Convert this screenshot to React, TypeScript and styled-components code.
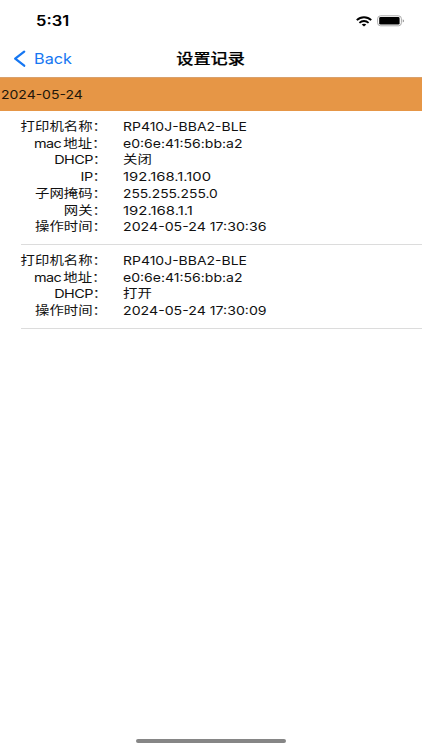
import React from 'react';
import styled, { createGlobalStyle } from 'styled-components';

const GlobalStyle = createGlobalStyle`
  * { box-sizing: border-box; }
  body {
    margin: 0;
    background: #fff;
    color: #111;
    font-family: Inter, "Noto Sans CJK SC", sans-serif;
  }
`;

const Screen = styled.div`
  display: flex;
  flex-direction: column;
  width: 422px;
  height: 750px;
  overflow: hidden;
  background: #fff;
`;

/* Wide lettering: stretched sideways from the edge it is aligned to. */
const Wide = styled.span<{ $x?: number; $from?: string }>`
  display: inline-block;
  white-space: pre;
  transform: scaleX(${p => p.$x ?? 1.2});
  transform-origin: ${p => p.$from ?? 'left'} center;
`;

const StatusBar = styled.header`
  display: flex;
  align-items: center;
  justify-content: space-between;
  height: 41px;
  padding: 1px 17px 0 36px;
  font-size: 14px;
  line-height: 20px;
  font-weight: 600;
  color: #000;
`;

const StatusIcons = styled.div`
  display: flex;
  align-items: center;
  gap: 5px;
`;

const NavBar = styled.nav`
  display: grid;
  grid-template-columns: 1fr auto 1fr;
  align-items: center;
  height: 36px;
  padding: 0 13px;
`;

const BackButton = styled.button`
  display: flex;
  align-items: center;
  gap: 8px;
  padding: 0;
  border: 0;
  background: none;
  color: #1677f2;
  font: 400 14.5px/20px Inter, sans-serif;
`;

const Title = styled.h1`
  margin: 0;
  font-size: 14.3px;
  line-height: 20px;
  font-weight: 500;
  color: #000;
  -webkit-text-stroke: 0.2px #000;
`;

const DateHeader = styled.h2`
  display: flex;
  align-items: center;
  height: 34px;
  margin: 0;
  padding: 0 0 1px 1px;
  background: #e69646;
  border-top: 1px solid #d9a16c;
  font-size: 12px;
  font-weight: 400;
  color: #22160a;
`;

const Entry = styled.dl`
  margin: 0 0 0 21px;
  padding: 7.75px 0 8px;
  border-bottom: 1px solid #dcdcdc;
`;

const Row = styled.div`
  display: grid;
  grid-template-columns: 86px 1fr;
  column-gap: 15.5px;
  height: 16.75px;
  font-size: 12px;
  line-height: 16.75px;
`;

const Label = styled.dt`
  text-align: right;
  word-spacing: -1.2px;
`;

const LatinRun = styled.span`
  letter-spacing: -0.45px;
`;

const Value = styled.dd`
  margin: 0;
`;

const HomeArea = styled.footer`
  display: flex;
  justify-content: center;
  margin-top: auto;
  padding-bottom: 7px;
`;

const HomeIndicator = styled.div`
  width: 150px;
  height: 4px;
  border-radius: 2px;
  background: #868686;
`;

type Field = { latin?: string; label?: string; value: string; stretch?: number };

const FULLWIDTH_COLON = '\uff1a';

const entries: Field[][] = [
  [
    { label: '打印机名称', value: 'RP410J-BBA2-BLE', stretch: 1.165 },
    { latin: 'mac ', label: '地址', value: 'e0:6e:41:56:bb:a2', stretch: 1.17 },
    { latin: 'DHCP', value: '关闭' },
    { latin: 'IP', value: '192.168.1.100', stretch: 1.235 },
    { label: '子网掩码', value: '255.255.255.0', stretch: 1.15 },
    { label: '网关', value: '192.168.1.1', stretch: 1.245 },
    { label: '操作时间', value: '2024-05-24 17:30:36', stretch: 1.18 },
  ],
  [
    { label: '打印机名称', value: 'RP410J-BBA2-BLE', stretch: 1.165 },
    { latin: 'mac ', label: '地址', value: 'e0:6e:41:56:bb:a2', stretch: 1.17 },
    { latin: 'DHCP', value: '打开' },
    { label: '操作时间', value: '2024-05-24 17:30:09', stretch: 1.18 },
  ],
];

const WifiIcon = () => (
  <svg width="16" height="11" viewBox="0 0 16 11" fill="none" stroke="#000">
    <path d="M.8 4.1C4.9.2 11.1.2 15.2 4.1" strokeWidth="2" />
    <path d="M3.4 6.8c2.6-2.4 6.6-2.4 9.2 0" strokeWidth="1.8" />
    <path d="M8 10.6 5.7 8.6c1.3-1 3.3-1 4.6 0z" fill="#000" stroke="none" />
  </svg>
);

const BatteryIcon = () => (
  <svg width="28" height="12" viewBox="0 0 28 12">
    <rect x=".6" y=".8" width="23.8" height="10" rx="3" fill="#fff" stroke="#aaa" />
    <rect x="2.2" y="2.1" width="20.4" height="7.5" rx="1.3" fill="#000" />
    <path d="M25.8 4.2c1.4.7 1.4 2.6 0 3.3z" fill="#777" />
  </svg>
);

const ChevronIcon = () => (
  <svg width="13" height="18" viewBox="0 0 13 18" fill="none" stroke="#1677f2" strokeWidth="2.3" strokeLinecap="round" strokeLinejoin="round">
    <path d="M11.2 1.7 2.2 8.7l9 7" />
  </svg>
);

export default function App() {
  return (
    <Screen>
      <GlobalStyle />
      <StatusBar>
        <Wide $x={1.18}>5:31</Wide>
        <StatusIcons>
          <WifiIcon />
          <BatteryIcon />
        </StatusIcons>
      </StatusBar>
      <NavBar>
        <BackButton>
          <ChevronIcon />
          <Wide $x={1.12}>Back</Wide>
        </BackButton>
        <Title><Wide $from="center">设置记录</Wide></Title>
      </NavBar>
      <DateHeader><Wide $x={1.165}>2024-05-24</Wide></DateHeader>
      {entries.map((fields, i) => (
        <Entry key={i}>
          {fields.map(({ latin, label, value, stretch }, row) => (
            <Row key={row}>
              <Label>
                <Wide $from="right">
                  {latin && <LatinRun>{latin}</LatinRun>}{label}{FULLWIDTH_COLON}
                </Wide>
              </Label>
              <Value><Wide $x={stretch}>{value}</Wide></Value>
            </Row>
          ))}
        </Entry>
      ))}
      <HomeArea><HomeIndicator /></HomeArea>
    </Screen>
  );
}
